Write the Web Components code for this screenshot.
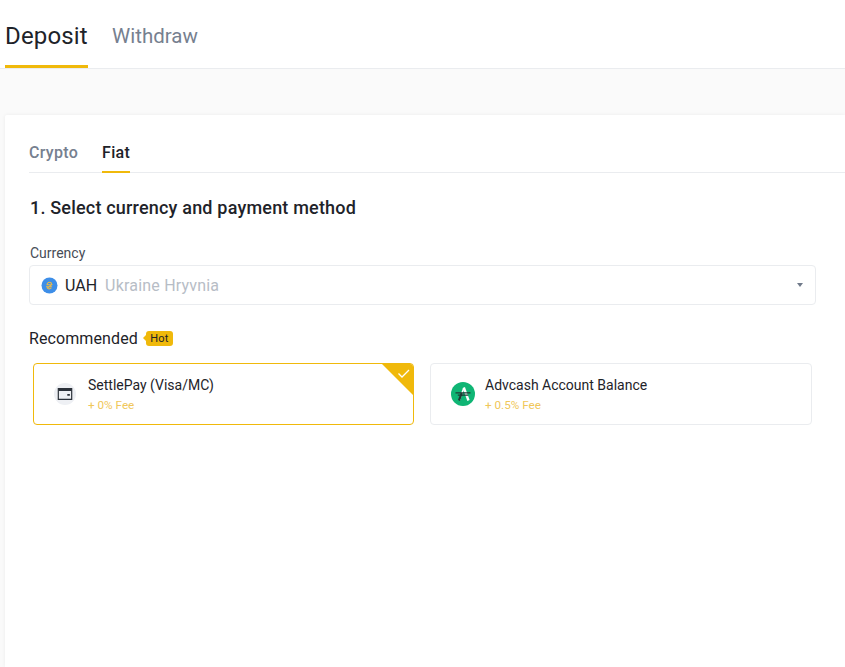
<!DOCTYPE html>
<html>
<head>
<meta charset="utf-8">
<style>
html, body { margin: 0; padding: 0; height: 100%; overflow: hidden; background: #fafafa; }
body { font-family: Roboto, "Liberation Sans", sans-serif; color: #1e2329; }
</style>
</head>
<body>
<deposit-page>
  <top-tabs></top-tabs>
  <fiat-card>
    <sub-tabs></sub-tabs>
    <h-step>1. Select currency and payment method</h-step>
    <currency-select></currency-select>
    <rec-label></rec-label>
    <div style="display:grid;grid-template-columns:381px 382px;gap:16px;margin:13px 0 0 4px">
      <pay-option selected name="SettlePay (Visa/MC)" fee="+ 0% Fee" icon="wallet"></pay-option>
      <pay-option name="Advcash Account Balance" fee="+ 0.5% Fee" icon="adv"></pay-option>
    </div>
  </fiat-card>
</deposit-page>
<script>
class DepositPage extends HTMLElement {
  constructor() {
    super();
    this.attachShadow({ mode: "open" }).innerHTML = `
      <style>:host{display:flex;flex-direction:column;height:667px;overflow:hidden;}</style>
      <slot></slot>`;
  }
}
customElements.define("deposit-page", DepositPage);

class TopTabs extends HTMLElement {
  constructor() {
    super();
    this.attachShadow({ mode: "open" }).innerHTML = `
      <style>
      :host{display:flex;height:68px;background:#fff;border-bottom:1px solid #eaecef;padding-left:5px;gap:24px;flex:none;}
      div{height:68px;box-sizing:border-box;font-size:24px;line-height:72px;color:#76808f;}
      .on{color:#1e2329;border-bottom:3px solid #f0b90b;width:83px;letter-spacing:.15px;font-weight:400;}
      .off{font-size:20.5px;line-height:72px;}
      </style>
      <div class="on">Deposit</div><div class="off">Withdraw</div>`;
  }
}
customElements.define("top-tabs", TopTabs);

class FiatCard extends HTMLElement {
  constructor() {
    super();
    this.attachShadow({ mode: "open" }).innerHTML = `
      <style>
      :host{display:block;flex:1;margin:46px 0 0 5px;background:#fff;padding-left:24px;box-shadow:0 0 4px rgba(0,0,0,.06);border-radius:2px 0 0 0;}
      </style>
      <slot></slot>`;
  }
}
customElements.define("fiat-card", FiatCard);

class SubTabs extends HTMLElement {
  constructor() {
    super();
    this.attachShadow({ mode: "open" }).innerHTML = `
      <style>
      :host{display:flex;gap:24px;height:58px;box-sizing:border-box;border-bottom:1px solid #eaecef;}
      div{font-size:16px;font-weight:500;line-height:76px;height:58px;box-sizing:border-box;color:#76808f;letter-spacing:.3px;}
      .on{color:#1e2329;border-bottom:2px solid #f0b90b;width:28px;white-space:nowrap;}
      </style>
      <div>Crypto</div><div class="on">Fiat</div>`;
  }
}
customElements.define("sub-tabs", SubTabs);

class HStep extends HTMLElement {
  constructor() {
    super();
    this.attachShadow({ mode: "open" }).innerHTML = `
      <style>:host{display:block;margin:24px 0 0 1px;font-size:18px;font-weight:500;line-height:22px;color:#1e2329;letter-spacing:.19px;}</style>
      <slot></slot>`;
  }
}
customElements.define("h-step", HStep);

class CurrencySelect extends HTMLElement {
  constructor() {
    super();
    this.attachShadow({ mode: "open" }).innerHTML = `
      <style>
      :host{display:block;margin-top:24px;width:787px;}
      label{display:block;font-size:14px;line-height:20px;color:#474d57;margin:0 0 2px 1px;}
      .box{position:relative;display:flex;align-items:center;height:40px;box-sizing:border-box;border:1px solid #eaecef;border-radius:4px;padding-left:11px;font-size:16px;}
      svg.coin{width:17px;height:17px;margin-right:7px;flex:none;}
      .code{color:#1e2329;margin-right:8px;}
      .name{color:#b7bdc6;letter-spacing:.2px;}
      .arrow{position:absolute;right:12px;top:17px;width:0;height:0;border-left:3.5px solid transparent;border-right:3.5px solid transparent;border-top:4px solid #707a8a;}
      </style>
      <label>Currency</label>
      <div class="box">
        <svg class="coin" viewBox="0 0 17 17"><circle cx="8.5" cy="8.5" r="8" fill="#3d8ee8"/><path d="M6 7.500c.5-2 2.200-2.600 3.600-2 1.300.6 1.100 2.300-.2 3.300L6.300 11c.9 1.200 2.700 1.100 4-.2M5.500 7.800h6M5 9.800h6" fill="none" stroke="#e9b949" stroke-width="1.100"/></svg>
        <span class="code">UAH</span><span class="name">Ukraine Hryvnia</span>
        <span class="arrow"></span>
      </div>`;
  }
}
customElements.define("currency-select", CurrencySelect);

class RecLabel extends HTMLElement {
  constructor() {
    super();
    this.attachShadow({ mode: "open" }).innerHTML = `
      <style>
      :host{display:flex;align-items:center;height:24px;margin-top:21px;font-size:16px;color:#1e2329;letter-spacing:.1px;}
      .hot{position:relative;margin-left:8px;height:15px;width:27px;background:#f0b90b;border-radius:3px;font-size:11px;line-height:15px;text-align:center;}
      .hot::before{content:"";position:absolute;left:-3px;top:4.500px;border-top:3px solid transparent;border-bottom:3px solid transparent;border-right:3px solid #f0b90b;}
      </style>
      <span>Recommended</span><span class="hot">Hot</span>`;
  }
}
customElements.define("rec-label", RecLabel);

const ICONS = {
  wallet: `<svg width="22" height="22" viewBox="0 0 24 24" style="margin-right:12px"><circle cx="12" cy="12" r="12" fill="#eef0f4"/><path d="M4.700 6.200h14.600v11.600H4.700z" fill="none" stroke="#2b3139" stroke-width="1.300"/><path d="M4.700 6.500h14.600v2.200H4.700z" fill="#2b3139"/><path d="M14.500 12h2.800v1.800h-2.800z" fill="#2b3139"/></svg>`,
  adv: `<svg width="24" height="24" viewBox="0 0 24 24" style="margin-right:10px"><circle cx="12" cy="12" r="12" fill="#0fb574"/><path d="M12.800 5.500 17.500 18.500" fill="none" stroke="#fff" stroke-width="2.400"/><path d="M8.500 18 12.800 6" fill="none" stroke="#fff" stroke-width="1.600"/><path d="M4.500 10.800h15M6.800 13.200h10.400" stroke="#1e3a34" stroke-width="1.300"/><path d="M8 18.500 10.800 11" stroke="#1e3a34" stroke-width="2.200"/></svg>`
};

class PayOption extends HTMLElement {
  constructor() {
    super();
    const on = this.hasAttribute("selected");
    this.attachShadow({ mode: "open" }).innerHTML = `
      <style>
      :host{display:flex;position:relative;height:62px;box-sizing:border-box;align-items:center;padding-left:20px;
        border:1px solid ${on ? "#f0b90b" : "#eaecef"};border-radius:4px;overflow:hidden;}
      .t{font-size:14px;line-height:20px;color:#1e2329;margin-top:-1px;}
      .f{font-size:11.7px;line-height:14px;color:#f0c75a;margin-top:3px;}
      svg{flex:none;display:block;}
      .corner{position:absolute;top:-1px;right:-1px;}
      </style>
      ${ICONS[this.getAttribute("icon")]}
      <div><div class="t">${this.getAttribute("name")}</div><div class="f">${this.getAttribute("fee")}</div></div>
      ${on ? `<svg class="corner" width="33" height="33" viewBox="0 0 33 33"><path d="M0 0h33v33z" fill="#f0b90b"/><path d="M17.500 10.500l3.500 3.500 7-7" fill="none" stroke="#fff" stroke-width="1.300"/></svg>` : ""}`;
  }
}
customElements.define("pay-option", PayOption);
</script>
</body>
</html>
